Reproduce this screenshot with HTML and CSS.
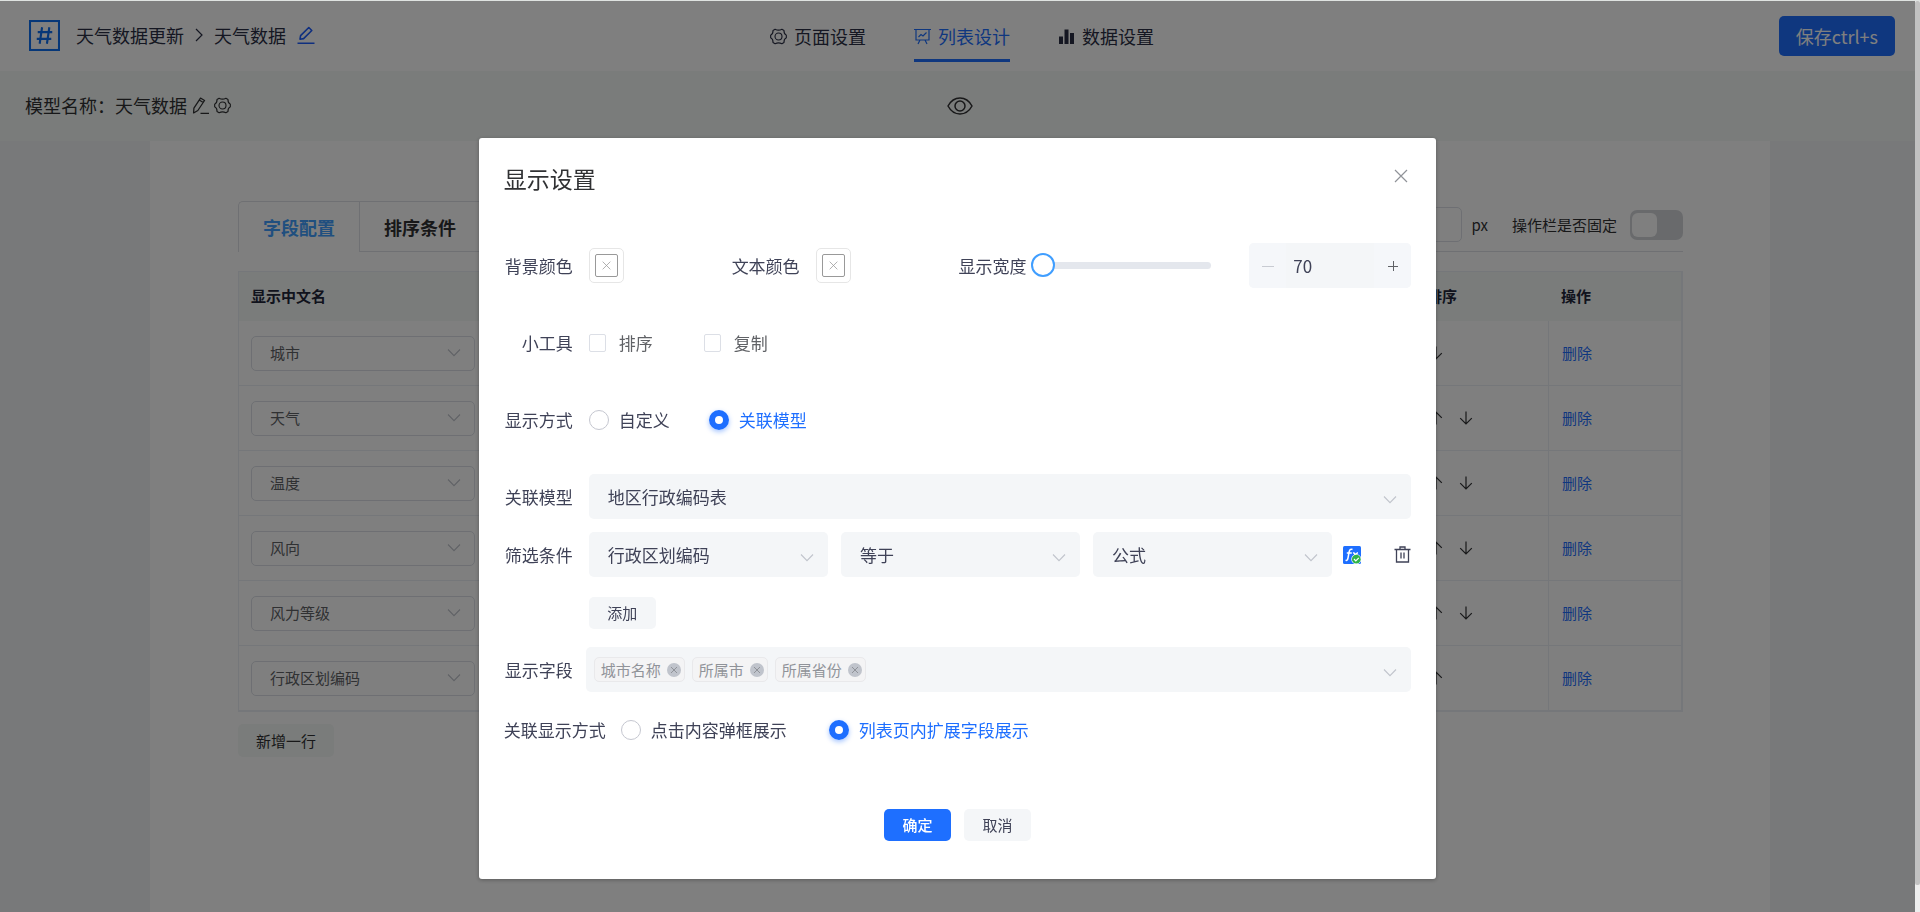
FILE: index.html
```html
<!DOCTYPE html>
<html lang="zh-CN">
<head>
<meta charset="utf-8">
<title>天气数据 - 列表设计</title>
<link rel="stylesheet" href="styles.css">
</head>
<body>
<svg class="sprite" aria-hidden="true">
  <symbol id="i-chev" viewBox="0 0 14 14"><path d="M1 3.5l6 6.2 6-6.2" fill="none" stroke="currentColor" stroke-width="1.1"/></symbol>
  <symbol id="i-gear" viewBox="0 0 18 18"><g fill="none" stroke="currentColor" stroke-width="1.2" stroke-linejoin="round"><path d="M5.400 1.300Q9 3.300 12.600 1.300L14.800 2.700Q14.600 6.200 17.300 7.600V10.400Q14.600 11.800 14.800 15.300L12.600 16.700Q9 14.700 5.400 16.700L3.200 15.300Q3.400 11.800.7 10.400V7.600Q3.400 6.200 3.200 2.700z"/><circle cx="9" cy="9" r="3.700"/></g></symbol>
  <symbol id="i-up" viewBox="0 0 14 14"><path d="M7 13.500V1M1.200 6.800L7 1l5.800 5.800" fill="none" stroke="currentColor" stroke-width="1.200"/></symbol>
  <symbol id="i-down" viewBox="0 0 14 14"><path d="M7 .5V13M1.200 7.200L7 13l5.800-5.800" fill="none" stroke="currentColor" stroke-width="1.200"/></symbol>
  <symbol id="i-x" viewBox="0 0 14 14"><path d="M1 1l12 12M13 1L1 13" fill="none" stroke="currentColor" stroke-width="1.200"/></symbol>
  <symbol id="i-tagx" viewBox="0 0 14 14"><circle cx="7" cy="7" r="7" fill="#c0c4cc"/><path d="M4 4l6 6M10 4l-6 6" fill="none" stroke="#909399" stroke-width="1"/></symbol>
</svg>

<div class="app">
  <header class="topbar">
    <div class="crumbs">
      <svg class="logo" viewBox="0 0 32 32"><g fill="none" stroke="currentColor"><rect x="1" y="1" width="30" height="30" stroke-width="2.200"/><path d="M13.500 7.500l-2.500 17M21 7.500l-2.500 17M9 12.500h15M8 19.500h15" stroke-width="2.200"/></g></svg>
      <a class="crumb" href="#">天气数据更新</a>
      <svg class="sep" viewBox="0 0 8 14"><path d="M1 1l6 6-6 6" fill="none" stroke="currentColor" stroke-width="1.200"/></svg>
      <span class="crumb">天气数据</span>
      <button class="bare blue edit-top" type="button" aria-label="编辑名称"><svg class="i18" viewBox="0 0 18 18"><path d="M3 13.200l.6-3.600 8.200-8.100 3 3-8.200 8.100zM.5 17.200h17" fill="none" stroke="currentColor" stroke-width="1.600" stroke-linejoin="round"/></svg></button>
    </div>
    <nav class="steps">
      <a class="step" href="#"><svg class="i16"><use href="#i-gear"/></svg>页面设置</a>
      <a class="step step-on" href="#"><svg class="i16" viewBox="0 0 17 17"><path d="M0 1.500h17M2 1.500v10.500h13V1.500M6 12l-2 4M11 12l2 4M4.500 9l2.500-2.500 2 1.500 3.500-3.500" fill="none" stroke="currentColor" stroke-width="1.200"/></svg>列表设计</a>
      <a class="step" href="#"><svg class="i16" viewBox="0 0 17 17"><path d="M1 8.500h4V16H1zM6.500 1.500h4V16h-4zM12 5h4v11h-4z" fill="currentColor"/></svg>数据设置</a>
    </nav>
    <div class="top-right"><button class="save" type="button">保存ctrl+s</button></div>
  </header>

  <section class="modelbar">
    <div class="model-name">
      <span>模型名称：天气数据</span>
      <button class="bare" type="button" aria-label="编辑模型"><svg class="i16" viewBox="0 0 16 16"><path d="M1.500 15l.3-4.600L8 1l3.800 2.300-6.300 9.400zM6.800 2.800l3.800 2.400M8 15.500h8" fill="none" stroke="currentColor" stroke-width="1.200" stroke-linejoin="round"/></svg></button>
      <button class="bare" type="button" aria-label="模型设置"><svg class="i16"><use href="#i-gear"/></svg></button>
    </div>
    <button class="bare" type="button" aria-label="预览"><svg class="eye" viewBox="0 0 26 18"><g fill="none" stroke="currentColor" stroke-width="1.500"><path d="M1 9C4 3.500 8.200 1 13 1s9 2.500 12 8c-3 5.500-7.200 8-12 8S4 14.500 1 9z"/><circle cx="13" cy="9" r="5"/></g></svg></button>
    <div></div>
  </section>

  <main class="stage">
    <div class="sheet">
      <div class="tabs">
        <button class="tab tab-on" type="button">字段配置</button>
        <button class="tab" type="button">排序条件</button>
        <div class="tab-rest">
          <input class="px-input" type="text" aria-label="操作栏宽度">
          <span class="px">px</span>
          <label for="fixed">操作栏是否固定</label>
          <input class="switch" type="checkbox" role="switch" id="fixed">
        </div>
      </div>

      <table class="grid">
        <colgroup><col class="c-name"><col><col class="c-op"><col class="c-op"></colgroup>
        <thead><tr><th>显示中文名</th><th></th><th>排序</th><th>操作</th></tr></thead>
        <tbody>
          <tr><td><div class="pick"><select aria-label="字段1"><option>城市</option></select><svg class="chev"><use href="#i-chev"/></svg></div></td><td></td><td><div class="moves"><svg><use href="#i-down"/></svg></div></td><td><a href="#">删除</a></td></tr>
          <tr><td><div class="pick"><select aria-label="字段2"><option>天气</option></select><svg class="chev"><use href="#i-chev"/></svg></div></td><td></td><td><div class="moves"><svg><use href="#i-up"/></svg><svg><use href="#i-down"/></svg></div></td><td><a href="#">删除</a></td></tr>
          <tr><td><div class="pick"><select aria-label="字段3"><option>温度</option></select><svg class="chev"><use href="#i-chev"/></svg></div></td><td></td><td><div class="moves"><svg><use href="#i-up"/></svg><svg><use href="#i-down"/></svg></div></td><td><a href="#">删除</a></td></tr>
          <tr><td><div class="pick"><select aria-label="字段4"><option>风向</option></select><svg class="chev"><use href="#i-chev"/></svg></div></td><td></td><td><div class="moves"><svg><use href="#i-up"/></svg><svg><use href="#i-down"/></svg></div></td><td><a href="#">删除</a></td></tr>
          <tr><td><div class="pick"><select aria-label="字段5"><option>风力等级</option></select><svg class="chev"><use href="#i-chev"/></svg></div></td><td></td><td><div class="moves"><svg><use href="#i-up"/></svg><svg><use href="#i-down"/></svg></div></td><td><a href="#">删除</a></td></tr>
          <tr><td><div class="pick"><select aria-label="字段6"><option>行政区划编码</option></select><svg class="chev"><use href="#i-chev"/></svg></div></td><td></td><td><div class="moves"><svg><use href="#i-up"/></svg></div></td><td><a href="#">删除</a></td></tr>
        </tbody>
      </table>
      <button class="add-row" type="button">新增一行</button>
    </div>
  </main>
</div>

<div class="mask">
  <form class="dialog" role="dialog" aria-labelledby="dlg-title">
    <div class="dlg-head">
      <h2 id="dlg-title">显示设置</h2>
      <button class="bare close" type="button" aria-label="关闭"><svg class="i14"><use href="#i-x"/></svg></button>
    </div>

    <div class="cols">
      <div class="row"><label class="lab" for="bg">背景颜色</label><button class="color" type="button" id="bg"><span class="swatch"><svg><use href="#i-x"/></svg></span></button></div>
      <div class="row"><label class="lab" for="fg">文本颜色</label><button class="color" type="button" id="fg"><span class="swatch"><svg><use href="#i-x"/></svg></span></button></div>
      <div class="row wide">
        <label class="lab" for="width">显示宽度</label>
        <input class="slider" type="range" id="width" min="70" max="500" value="70">
        <div class="stepper">
          <button type="button" disabled aria-label="减少"><svg viewBox="0 0 12 12"><path d="M0 6.500h12" stroke="currentColor" fill="none"/></svg></button>
          <input type="text" value="70" aria-label="宽度数值">
          <button type="button" aria-label="增加"><svg viewBox="0 0 12 12"><path d="M1 6.500h10M6.500 1v10" stroke="currentColor" fill="none"/></svg></button>
        </div>
      </div>
    </div>

    <div class="row loose">
      <span class="lab">小工具</span>
      <label class="opt check"><input type="checkbox">排序</label>
      <label class="opt check"><input type="checkbox">复制</label>
    </div>

    <div class="row loose">
      <span class="lab">显示方式</span>
      <label class="opt mode"><input type="radio" name="mode">自定义</label>
      <label class="opt mode"><input type="radio" name="mode" checked>关联模型</label>
    </div>

    <div class="row loose">
      <label class="lab" for="model">关联模型</label>
      <div class="field"><select id="model"><option>地区行政编码表</option></select><svg class="chev"><use href="#i-chev"/></svg></div>
    </div>

    <div class="row tight">
      <span class="lab">筛选条件</span>
      <div class="filters">
        <div class="field"><select aria-label="条件字段"><option>行政区划编码</option></select><svg class="chev"><use href="#i-chev"/></svg></div>
        <div class="field"><select aria-label="条件运算"><option>等于</option></select><svg class="chev"><use href="#i-chev"/></svg></div>
        <div class="field"><select aria-label="条件类型"><option>公式</option></select><svg class="chev"><use href="#i-chev"/></svg></div>
      </div>
      <div class="acts">
        <button class="bare" type="button" aria-label="编辑公式"><svg class="i18" viewBox="0 0 18 18"><rect x="0" y="0" width="18" height="18" rx="1.500" fill="#1e6fff"/><path d="M9.500 3.500c-2-.9-3 .2-3.400 2.500L5 12c-.4 2-1 2.700-2.400 2.300M3.800 7h5M10 7c1.800-.5 1.800 1 2.200 2.500M15 6.800c-2 .2-3 3-5 4.200" fill="none" stroke="#fff" stroke-width="1.500"/><circle cx="13.300" cy="13.200" r="5" fill="#fff"/><circle cx="13.300" cy="13.200" r="4.400" fill="#2fb34a"/><path d="M11 13l1.800 1.800 3-3" fill="none" stroke="#fff" stroke-width="1.200"/></svg></button>
        <button class="bare" type="button" aria-label="删除条件"><svg class="i16" viewBox="0 0 16 17"><path d="M0 3.500h16M5.500 3V1h5v2M2 3.500V16h12V3.500M6.500 6.500v6M9.500 6.500v6" fill="none" stroke="currentColor" stroke-width="1.300"/></svg></button>
      </div>
    </div>

    <div class="row add-line"><button class="btn" type="button">添加</button></div>

    <div class="row shown">
      <span class="lab">显示字段</span>
      <div class="field tags" role="group" aria-label="显示字段">
        <span class="tag">城市名称<button class="bare" type="button" aria-label="移除城市名称"><svg class="i14"><use href="#i-tagx"/></svg></button></span>
        <span class="tag">所属市<button class="bare" type="button" aria-label="移除所属市"><svg class="i14"><use href="#i-tagx"/></svg></button></span>
        <span class="tag">所属省份<button class="bare" type="button" aria-label="移除所属省份"><svg class="i14"><use href="#i-tagx"/></svg></button></span>
        <svg class="chev"><use href="#i-chev"/></svg>
      </div>
    </div>

    <div class="row last">
      <span class="lab long">关联显示方式</span>
      <label class="opt link"><input type="radio" name="link">点击内容弹框展示</label>
      <label class="opt link"><input type="radio" name="link" checked>列表页内扩展字段展示</label>
    </div>

    <div class="dlg-foot">
      <button class="btn btn-main" type="submit">确定</button>
      <button class="btn" type="button">取消</button>
    </div>
  </form>
</div>
<div class="scroll" aria-hidden="true"><div class="thumb"></div></div>
</body>
</html>
```

FILE: styles.css
```css
* { box-sizing: border-box; }
body {
  margin: 0;
  height: 100vh;
  overflow: hidden;
  font-family: "Noto Sans CJK SC", sans-serif;
  font-size: 15px;
  line-height: 24px;
  color: #303133;
}
button, input, select { font: inherit; color: inherit; margin: 0; }
a { color: inherit; text-decoration: none; }
svg { display: block; flex: none; }
.sprite { display: none; }
.bare { border: 0; padding: 0; background: none; }
.blue { color: #1e5eff; }
.i14 { width: 14px; height: 14px; }
.i16 { width: 17px; height: 17px; }
.i18 { width: 18px; height: 18px; }

/* page frame */
.app {
  display: flex;
  flex-direction: column;
  height: 100vh;
  border-top: 1px solid #dfe3e1;
}
.topbar {
  display: grid;
  grid-template-columns: 1fr auto 1fr;
  height: 70px;
  flex: none;
  padding: 0 25px 0 29px;
  background: #fff;
  font-size: 18px;
}
.crumbs { display: flex; align-items: center; padding-bottom: 2px; color: #2b2f45; }
.logo { width: 31px; height: 31px; margin-right: 16px; color: #0d6ff0; }
.sep { width: 8px; height: 14px; margin: 0 11px; }
.edit-top { margin-left: 11px; }
.steps { display: flex; gap: 48px; color: #2b2f45; }
.step {
  display: flex;
  align-items: center;
  gap: 7px;
  height: 61px;
  padding-top: 12px;
  border-bottom: 3px solid transparent;
}
.step-on { color: #1e6fff; border-color: #1e6fff; }
.top-right { display: flex; align-items: center; justify-content: flex-end; }
.save {
  height: 40px;
  padding: 0 17px;
  border: 0;
  border-radius: 5px;
  background: #1e6fff;
  color: #fff;
}
.modelbar {
  display: grid;
  grid-template-columns: 1fr auto 1fr;
  align-items: center;
  height: 70px;
  flex: none;
  padding: 0 25px;
  background: #f4f8f6;
  font-size: 18px;
}
.model-name { display: flex; align-items: center; gap: 5px; padding-bottom: 2px; }
.eye { width: 26px; height: 18px; }
.stage {
  flex: 1;
  display: flex;
  padding: 0 150px;
  background: #f0f2f5;
}
.sheet { flex: 1; padding: 60px 87px 0 88px; background: #fff; }

/* tabs */
.tabs { display: flex; height: 51px; }
.tab {
  padding: 0 24px;
  border: 1px solid #dfe1e6;
  border-right: 0;
  border-radius: 0;
  background: none;
  font-size: 18px;
  font-weight: 700;
}
.tab-on { border-bottom: 0; border-top-left-radius: 5px; color: #409eff; }
.tab-rest {
  flex: 1;
  display: flex;
  align-items: center;
  justify-content: flex-end;
  border-bottom: 1px solid #dfe1e6;
  border-top: 1px solid transparent;
  padding-bottom: 4px;
}
.px-input { width: 120px; height: 35px; border: 1px solid #dcdfe6; border-radius: 5px; background: #fff; }
.px { margin: 0 24px 0 9px; }
.switch {
  appearance: none;
  display: flex;
  width: 53px;
  height: 30px;
  margin-left: 13px;
  padding: 3px 2px;
  border-radius: 7px;
  background: #d3d5d9;
}
.switch::before { content: ""; width: 25px; border-radius: 6px; background: #fff; }

/* field table */
.grid {
  width: 100%;
  margin-top: 19px;
  table-layout: fixed;
  border-collapse: separate;
  border-spacing: 0;
  border: 1px solid #ebeef5;
  border-right-width: 2px;
}
.c-name { width: 248px; }
.c-op { width: 133px; }
.grid th {
  height: 49px;
  padding: 0 12px 2px;
  background: #f4f8f6;
  text-align: left;
  font-weight: 700;
  color: #23263a;
}
.grid td { height: 65px; padding: 0 12px; border-bottom: 1px solid #ebeef5; }
.grid td:last-child, .grid th:last-child { padding-left: 13px; }
.grid td + td { border-left: 1px solid #ebeef5; }
.grid a { color: #1e6fff; }
.pick, .field { position: relative; }
.pick select {
  appearance: none;
  display: block;
  width: 100%;
  height: 35px;
  padding: 0 18px;
  border: 1px solid #dcdfe6;
  border-radius: 5px;
  background: none;
  color: #606266;
}
.chev {
  position: absolute;
  top: 50%;
  right: 14px;
  width: 14px;
  height: 14px;
  margin-top: -7px;
  color: #c0c4cc;
}
.moves { display: flex; gap: 16px; padding-left: 1px; }
.moves svg { width: 14px; height: 14px; }
.add-row {
  height: 33px;
  margin-top: 12px;
  padding: 0 18px;
  border: 0;
  border-radius: 5px;
  background: #f4f8f6;
}

/* dialog */
.mask {
  position: fixed;
  inset: 1px 5px 0 0;
  background: rgba(0, 0, 0, 0.5);
}
.dialog {
  width: 50%;
  margin: 137px auto 0;
  padding: 25px 25px 38px;
  border-radius: 3px;
  background: #fff;
  box-shadow: 0 1px 4px rgba(0, 0, 0, 0.3);
  font-size: 17px;
  color: #3f4257;
}
.dlg-head { display: flex; justify-content: space-between; height: 80px; padding: 1px 3px 0 0; }
.dlg-head h2 { margin: 0; font-size: 23px; font-weight: 400; line-height: 28px; color: #303133; }
.close { height: 24px; color: #909399; }
.cols { display: grid; grid-template-columns: 1fr 1fr 2fr; }
.row { display: flex; align-items: center; min-height: 45px; }
.loose { margin-top: 32px; }
.tight { margin-top: 13px; }
.last { margin-top: 15px; }
.lab { flex: none; width: 85px; padding-right: 16px; text-align: right; }
.lab.long { width: 117px; padding-right: 0; text-align: left; }
.color {
  width: 35px;
  height: 35px;
  padding: 5px;
  border: 1px solid #e6e6e6;
  border-radius: 5px;
  background: #fff;
}
.swatch {
  display: grid;
  place-items: center;
  height: 23px;
  border: 1px solid #999;
  border-radius: 2px;
  color: #999;
}
.swatch svg { width: 9px; height: 9px; }
.slider {
  appearance: none;
  flex: 1;
  min-width: 0;
  height: 24px;
  margin: 0 38px 0 -12px;
  background: none;
}
.slider::-webkit-slider-runnable-track { height: 7px; border-radius: 4px; background: #e4e7ed; }
.slider::-webkit-slider-thumb {
  appearance: none;
  width: 24px;
  height: 24px;
  margin-top: -9px;
  border: 2px solid #409eff;
  border-radius: 50%;
  background: #fff;
}
.stepper {
  display: flex;
  width: 162px;
  height: 45px;
  border-radius: 5px;
  overflow: hidden;
  background: #f4f6f8;
}
.stepper button {
  display: grid;
  place-items: center;
  width: 37px;
  padding: 0;
  border: 0;
  background: #f5f7fa;
  color: #606266;
}
.stepper button:disabled { color: #c8cbd2; }
.stepper svg { width: 12px; height: 12px; }
.stepper input { flex: 1; min-width: 0; padding: 0 7px; border: 0; background: none; }
.opt { display: flex; align-items: center; }
.check { margin-right: 51px; gap: 13px; color: #606266; }
.check input {
  appearance: none;
  width: 17px;
  height: 18px;
  border: 1px solid #dcdfe6;
  border-radius: 2px;
}
.opt input[type="radio"] {
  appearance: none;
  width: 20px;
  height: 20px;
  margin-right: 10px;
  border: 1px solid #c5c7d0;
  border-radius: 50%;
}
.opt input[type="radio"]:checked {
  border: 6px solid #1e6fff;
  box-shadow: 0 2px 5px rgba(30, 111, 255, 0.4);
}
.opt:has(input[type="radio"]:checked) { color: #1e6fff; }
.mode { min-width: 120px; }
.link { min-width: 208px; }
.field { flex: 1; min-width: 0; height: 45px; border-radius: 5px; background: #f4f6f8; }
.field select {
  appearance: none;
  display: block;
  width: 100%;
  height: 45px;
  padding: 0 19px;
  border: 0;
  background: none;
}
.field .chev { margin-top: -4px; }
.filters { flex: 1; display: flex; gap: 13px; }
.acts { display: flex; align-items: center; gap: 33px; margin-left: 11px; }
.add-line { min-height: 32px; margin-top: 20px; padding-left: 85px; }
.btn {
  min-width: 67px;
  height: 32px;
  padding: 0 18px;
  border: 0;
  border-radius: 5px;
  background: #f4f6f8;
  font-size: 15px;
}
.btn-main { background: #1e6fff; color: #fff; font-weight: 500; }
.shown { margin-top: 18px; }
.shown .lab { width: 82px; padding-right: 13px; }
.tags { display: flex; align-items: center; gap: 7px; padding: 0 8px; }
.tag {
  display: flex;
  align-items: center;
  gap: 6px;
  height: 25px;
  padding: 0 3px 0 6px;
  border: 1px solid #e9e9eb;
  border-radius: 5px;
  background: #f4f4f5;
  font-size: 15px;
  color: #909399;
}
.dlg-foot { display: flex; justify-content: center; gap: 13px; margin-top: 57px; }

/* overlay scrollbar */
.scroll { position: fixed; inset: 1px 0 0 auto; width: 5px; background: #ededed; }
.thumb { height: 97%; border-radius: 2px; background: #c1c1c1; }
```
